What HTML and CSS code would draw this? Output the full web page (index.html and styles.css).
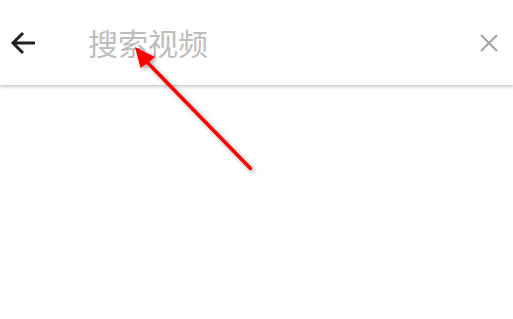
FILE: index.html
```html
<!DOCTYPE html>
<html lang="zh">
<head>
<meta charset="utf-8">
<link rel="stylesheet" href="styles.css">
</head>
<body>
<header class="bar">
  <button class="icon-btn back" aria-label="返回">
    <svg width="26" height="24" viewBox="0 0 26 24"><path d="M25 12H3M13 2L3 12L13 22" fill="none" stroke="#212121" stroke-width="3" stroke-linejoin="miter"/></svg>
  </button>
  <div class="search">搜索视频</div>
  <button class="icon-btn clear" aria-label="清除">
    <svg width="18" height="18" viewBox="0 0 18 18"><path d="M1 1L17 17M17 1L1 17" stroke="#a4a4a4" stroke-width="2" fill="none"/></svg>
  </button>
</header>
<main class="content"></main>
<svg class="annotation" width="513" height="319" viewBox="0 0 513 319">
  <defs>
    <filter id="sh" x="-20%" y="-20%" width="140%" height="140%">
      <feDropShadow dx="2" dy="2" stdDeviation="2" flood-color="#000" flood-opacity="0.35"/>
    </filter>
  </defs>
  <g filter="url(#sh)" fill="#ff0000" stroke="#ff0000">
    <line x1="250.5" y1="168.5" x2="145" y2="60" stroke-width="3.5" stroke-linecap="round"/>
    <polygon points="135,47 155,57 148.5,62.5 140.5,68" stroke="none"/>
  </g>
</svg>
</body>
</html>
```
FILE: styles.css
```css
html, body {
  margin: 0;
  padding: 0;
  background: #ffffff;
  width: 513px;
  height: 319px;
  overflow: hidden;
  font-family: "Noto Sans CJK SC", "Noto Sans", sans-serif;
}
.bar {
  height: 85px;
  display: flex;
  align-items: center;
  background: #ffffff;
  box-shadow: 0 1px 4px rgba(0, 0, 0, 0.3);
  position: relative;
  z-index: 1;
}
.icon-btn {
  border: 0;
  background: none;
  padding: 0;
  display: flex;
  align-items: center;
  justify-content: center;
}
.back {
  margin-left: 10px;
  width: 26px;
  height: 24px;
}
.search {
  flex: 1;
  margin-left: 52px;
  font-size: 30px;
  color: #bdbdbd;
  line-height: 40px;
  margin-top: -2px;
}
.clear {
  width: 18px;
  height: 18px;
  margin-right: 15px;
}
.annotation {
  position: absolute;
  left: 0;
  top: 0;
  z-index: 2;
  pointer-events: none;
}
```
